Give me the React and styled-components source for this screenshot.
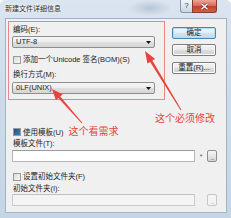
import React from "react";
import styled, { createGlobalStyle } from "styled-components";

const GlobalStyle = createGlobalStyle`
  html, body {
    margin: 0;
    padding: 0;
    background: #ffffff;
  }
`;

const FONT = `"Liberation Sans", "Noto Sans CJK SC", sans-serif`;
const MARK_RED = "#e6443c";

const Window = styled.div`
  position: relative;
  width: 231px;
  height: 218px;
  box-sizing: border-box;
  display: flex;
  flex-direction: column;
  padding: 0 4px 5px 5px;
  background:
    radial-gradient(ellipse 22px 8px at 150px 8px, rgba(120, 140, 165, 0.35), rgba(120, 140, 165, 0)),
    linear-gradient(180deg, #dbe5f0 0%, #cddbe9 45%, #c6d5e6 100%);
  border-radius: 5px 5px 0 0;
  overflow: hidden;
  font-family: ${FONT};
  font-size: 7.5px;
  color: #222222;
`;

const TitleBar = styled.div`
  height: 18px;
  display: flex;
  align-items: flex-start;
  flex-shrink: 0;
`;

const Title = styled.div`
  flex: 1;
  font-size: 7px;
  line-height: 10px;
  padding-top: 4px;
  color: #2b2b2b;
  text-shadow: 0 0 3px #ffffff, 0 0 2px #ffffff;
`;

const CaptionButtons = styled.div`
  display: flex;
  margin-right: 10px;
`;

const HelpButton = styled.div`
  width: 12px;
  height: 13px;
  box-sizing: border-box;
  border: 1px solid #8696aa;
  border-top: none;
  border-right: none;
  border-radius: 0 0 0 3px;
  background: linear-gradient(180deg, #f3f6fa 0%, #dde6f0 50%, #cbd7e4 100%);
  display: flex;
  align-items: center;
  justify-content: center;
  font-size: 8px;
  line-height: 8px;
  color: #3a3a3a;
`;

const CloseButton = styled.div`
  width: 25px;
  height: 13px;
  box-sizing: border-box;
  border: 1px solid #8a3b32;
  border-top: none;
  border-radius: 0 0 3px 0;
  background: linear-gradient(180deg, #eaa797 0%, #d8705f 45%, #c4412f 55%, #d65c45 100%);
  display: flex;
  align-items: center;
  justify-content: center;
`;

const Client = styled.div`
  flex: 1;
  min-height: 0;
  display: flex;
  flex-direction: column;
  background: #f0f0f0;
  border: 1px solid #a3b3c6;
`;

const TopRow = styled.div`
  display: flex;
  align-items: flex-start;
  padding: 2px 0 0 2px;
`;

const GroupFrame = styled.div`
  width: 157px;
  height: 79px;
  box-sizing: border-box;
  border: 1px solid #e98585;
  padding-left: 3px;
  display: flex;
  flex-direction: column;
`;

const Label = styled.div`
  margin-top: ${(p) => p.$top}px;
  padding-left: 1px;
  line-height: 9px;
  white-space: nowrap;
`;

const Combo = styled.div`
  margin-top: ${(p) => p.$top}px;
  width: 143px;
  height: 12px;
  box-sizing: border-box;
  border: 1px solid #8e8e8e;
  border-radius: 2px;
  background: linear-gradient(180deg, #f6f6f6 0%, #ececec 50%, #e0e0e0 51%, #d6d6d6 100%);
  display: flex;
  align-items: center;
  padding: 0 3px 0 3px;
  line-height: 10px;
`;

const ComboText = styled.span`
  flex: 1;
  white-space: nowrap;
`;

const CheckRow = styled.div`
  margin-top: ${(p) => p.$top}px;
  height: ${(p) => p.$height || 9}px;
  display: flex;
  align-items: center;
  padding-left: 1px;
  white-space: nowrap;
`;

const Box = styled.span`
  width: 8px;
  height: 8px;
  box-sizing: border-box;
  flex-shrink: 0;
  margin-right: 2px;
  border: 1px solid ${(p) => (p.$disabled ? "#c4c4c4" : "#9a9a9a")};
  background: ${(p) =>
    p.$disabled ? "#f2f2f2" : "linear-gradient(135deg, #dcdcdc 0%, #f7f7f7 100%)"};
  display: flex;
  align-items: center;
  justify-content: center;
`;

const BoxFill = styled.span`
  width: 6px;
  height: 6px;
  background: linear-gradient(135deg, #1d4f7c 0%, #3f83b6 100%);
`;

const CheckText = styled.span`
  line-height: 9px;
`;

const ButtonColumn = styled.div`
  display: flex;
  flex-direction: column;
  margin: 6px 0 0 7px;
`;

const PushButton = styled.div`
  margin-top: ${(p) => p.$top || 0}px;
  width: 44px;
  height: 12px;
  box-sizing: border-box;
  border: 1px solid ${(p) => (p.$default ? "#4a86b4" : "#7d7d7d")};
  border-radius: 2px;
  background: ${(p) =>
    p.$default
      ? "linear-gradient(180deg, #f0f6fb 0%, #e1edf7 50%, #cfe3f2 51%, #c2dbee 100%)"
      : "linear-gradient(180deg, #f3f3f3 0%, #ebebeb 50%, #dddddd 51%, #d1d1d1 100%)"};
  box-shadow: ${(p) => (p.$default ? "inset 0 0 0 1px #b6dcf2" : "inset 0 0 0 1px #fcfcfc")};
  display: flex;
  align-items: center;
  justify-content: center;
  line-height: 10px;
  white-space: nowrap;
`;

const Note = styled.div`
  margin-top: 13px;
  padding-right: 11px;
  text-align: right;
  font-size: 10px;
  line-height: 12px;
  color: ${MARK_RED};
  white-space: nowrap;
`;

const Lower = styled.div`
  display: flex;
  flex-direction: column;
  padding-left: 6px;
`;

const InlineNote = styled.span`
  margin-left: 5px;
  font-size: 10px;
  line-height: 12px;
  color: ${MARK_RED};
`;

const FieldRow = styled.div`
  margin-top: ${(p) => p.$top}px;
  height: 12px;
  display: flex;
  align-items: stretch;
`;

const TextField = styled.div`
  width: 183px;
  box-sizing: border-box;
  border: 1px solid ${(p) => (p.$disabled ? "#cbcbcb" : "#b3b5bb")};
  border-top-color: ${(p) => (p.$disabled ? "#c0c0c0" : "#989ba2")};
  background: ${(p) => (p.$disabled ? "#f4f4f4" : "#ffffff")};
`;

const Star = styled.span`
  width: 12px;
  text-align: center;
  font-size: 7px;
  line-height: 13px;
  color: #555555;
`;

const BrowseButton = styled.div`
  width: 10px;
  box-sizing: border-box;
  border: 1px solid ${(p) => (p.$disabled ? "#c6c6c6" : "#8e8e8e")};
  border-radius: 2px;
  background: ${(p) =>
    p.$disabled ? "#f4f4f4" : "linear-gradient(180deg, #f6f6f6 0%, #e4e4e4 55%, #d4d4d4 100%)"};
  color: ${(p) => (p.$disabled ? "#a0a0a0" : "#333333")};
  font-size: 6px;
  line-height: 14px;
  text-align: center;
  letter-spacing: -0.5px;
`;

const Overlay = styled.svg`
  position: absolute;
  left: 0;
  top: 0;
  width: 231px;
  height: 218px;
  pointer-events: none;
`;

function arrowPoints(tail, tip, head = 12, tailW = 0.5, neckW = 1.3, headW = 4.5) {
  const dx = tip[0] - tail[0];
  const dy = tip[1] - tail[1];
  const len = Math.hypot(dx, dy);
  const ux = dx / len;
  const uy = dy / len;
  const nx = -uy;
  const ny = ux;
  const bx = tip[0] - head * ux;
  const by = tip[1] - head * uy;
  const pts = [
    [tail[0] + tailW * nx, tail[1] + tailW * ny],
    [bx + neckW * nx, by + neckW * ny],
    [bx + headW * nx, by + headW * ny],
    tip,
    [bx - headW * nx, by - headW * ny],
    [bx - neckW * nx, by - neckW * ny],
    [tail[0] - tailW * nx, tail[1] - tailW * ny],
  ];
  return pts.map((p) => p[0].toFixed(2) + "," + p[1].toFixed(2)).join(" ");
}

function Arrow({ tail, tip, head }) {
  return <polygon points={arrowPoints(tail, tip, head)} fill={MARK_RED} />;
}

function Check({ checked, disabled, children }) {
  return (
    <>
      <Box $disabled={disabled}>{checked && <BoxFill />}</Box>
      <CheckText>{children}</CheckText>
    </>
  );
}

function DropArrow() {
  return (
    <svg width="5" height="3" viewBox="0 0 5 3">
      <path d="M0 0 L5 0 L2.5 3 Z" fill="#111" />
    </svg>
  );
}

function CloseGlyph() {
  return (
    <svg width="9" height="7" viewBox="0 0 9 7">
      <path d="M1.5 0.8 L7.5 6.2 M7.5 0.8 L1.5 6.2" stroke="#6b2a22" strokeWidth="2.6" />
      <path d="M1.5 0.8 L7.5 6.2 M7.5 0.8 L1.5 6.2" stroke="#ffffff" strokeWidth="1.5" />
    </svg>
  );
}

export default function App() {
  return (
    <>
      <GlobalStyle />
      <Window>
        <TitleBar>
          <Title>新建文件详细信息</Title>
          <CaptionButtons>
            <HelpButton>?</HelpButton>
            <CloseButton>
              <CloseGlyph />
            </CloseButton>
          </CaptionButtons>
        </TitleBar>
        <Client>
          <TopRow>
            <GroupFrame>
              <Label $top={3}>编码(E):</Label>
              <Combo $top={2}>
                <ComboText>UTF-8</ComboText>
                <DropArrow />
              </Combo>
              <CheckRow $top={7}>
                <Check>添加一个Unicode 签名(BOM)(S)</Check>
              </CheckRow>
              <Label $top={6}>换行方式(M):</Label>
              <Combo $top={3}>
                <ComboText>0LF(UNIX)</ComboText>
                <DropArrow />
              </Combo>
            </GroupFrame>
            <ButtonColumn>
              <PushButton $default>确定</PushButton>
              <PushButton $top={5}>取消</PushButton>
              <PushButton $top={6}>重置(R)...</PushButton>
            </ButtonColumn>
          </TopRow>
          <Note>这个必须修改</Note>
          <Lower>
            <CheckRow $top={1} $height={12}>
              <Check checked>使用模板(U)</Check>
              <InlineNote>这个看需求</InlineNote>
            </CheckRow>
            <Label $top={1}>模板文件(T):</Label>
            <FieldRow $top={2}>
              <TextField />
              <Star>*</Star>
              <BrowseButton>...</BrowseButton>
            </FieldRow>
            <CheckRow $top={10}>
              <Check>设置初始文件夹(F)</Check>
            </CheckRow>
            <Label $top={3}>初始文件夹(I):</Label>
            <FieldRow $top={1}>
              <TextField $disabled />
              <Star />
              <BrowseButton $disabled>...</BrowseButton>
            </FieldRow>
          </Lower>
        </Client>
        <Overlay viewBox="0 0 231 218">
          <Arrow tail={[181, 110]} tip={[145, 51]} head={12} />
          <Arrow tail={[82, 123]} tip={[52, 89]} head={11} />
        </Overlay>
      </Window>
    </>
  );
}
